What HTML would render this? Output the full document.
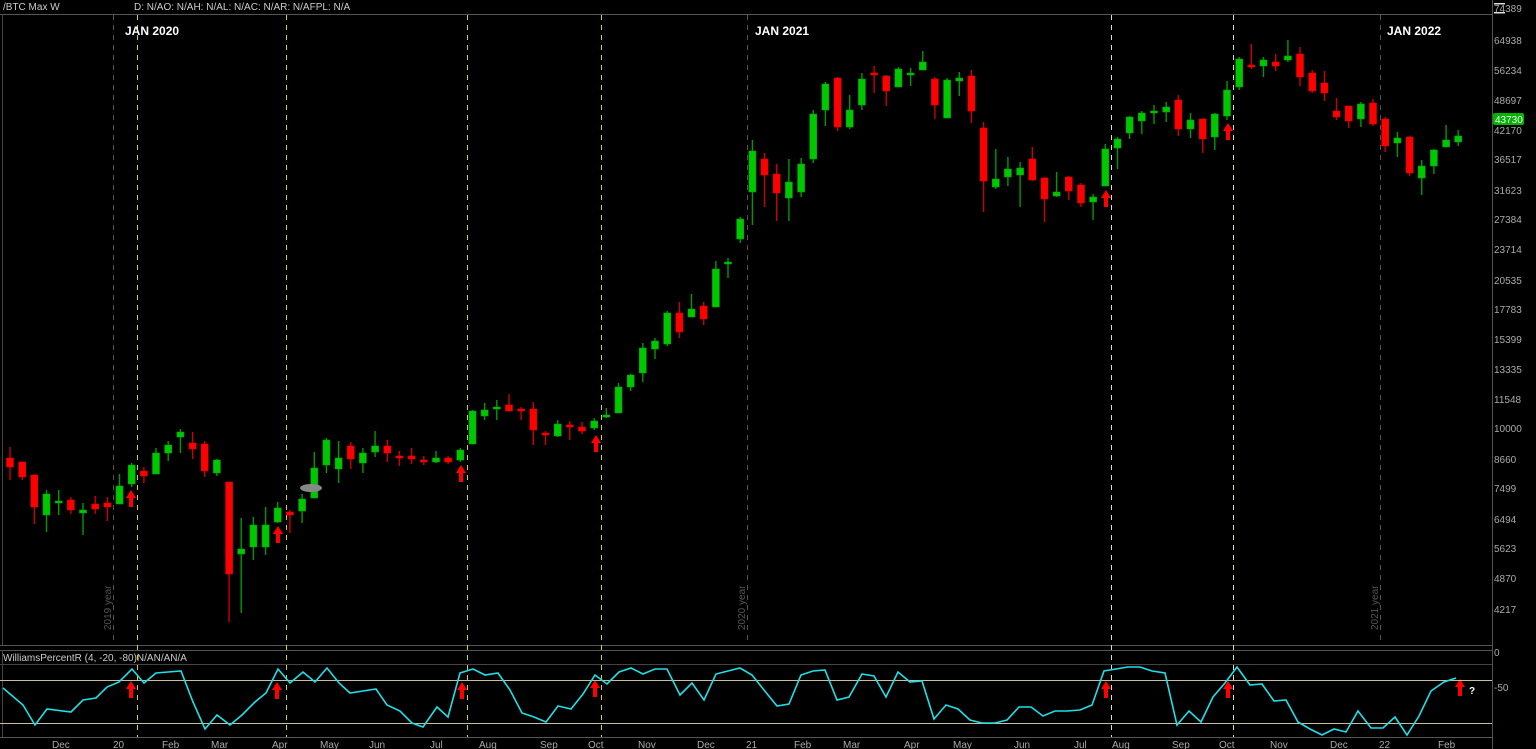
<!DOCTYPE html>
<html><head><meta charset="utf-8"><style>
html,body{margin:0;padding:0;background:#000;width:1536px;height:749px;overflow:hidden}
svg{display:block}
text{font-family:"Liberation Sans",sans-serif}
.g rect{fill:#00c800;stroke:#00a000;stroke-width:.6}
.g path{stroke:#009a00;stroke-width:1.4;fill:none}
.r rect{fill:#f00;stroke:#d00;stroke-width:.6}
.r path{stroke:#c00;stroke-width:1.4;fill:none}
.ax text{fill:#aaa;font-size:10px}
.yl{stroke:#d8d800;stroke-width:1;stroke-dasharray:5,5}
.wl{stroke:#e0e0b8;stroke-width:1;stroke-dasharray:5,5}
.gl{stroke:#555;stroke-width:1;stroke-dasharray:5,5}
</style></head><body>
<svg width="1536" height="749" viewBox="0 0 1536 749">
<rect x="0" y="0" width="1536" height="749" fill="#000"/>
<line x1="0" y1="14.5" x2="1492" y2="14.5" stroke="#555"/>
<line x1="2.5" y1="15" x2="2.5" y2="645" stroke="#444"/>
<line x1="1492.5" y1="0" x2="1492.5" y2="749" stroke="#555"/>
<line x1="0" y1="645.5" x2="1492" y2="645.5" stroke="#555"/>
<line x1="0" y1="650.5" x2="1492" y2="650.5" stroke="#555"/>
<line x1="0" y1="664.5" x2="1492" y2="664.5" stroke="#444"/>
<line x1="2.5" y1="650" x2="2.5" y2="737" stroke="#444"/>
<line x1="0" y1="737.5" x2="1492" y2="737.5" stroke="#555"/>
<text x="3" y="10" fill="#ccc" font-size="10">/BTC Max W</text>
<text x="134" y="10" fill="#ccc" font-size="10">D: N/AO: N/AH: N/AL: N/AC: N/AR: N/AFPL: N/A</text>
<text x="3" y="661" fill="#ccc" font-size="10">WilliamsPercentR (4, -20, -80)N/AN/AN/A</text>

<line class="gl" x1="113.5" y1="15" x2="113.5" y2="645"/>
<line class="gl" x1="747.5" y1="15" x2="747.5" y2="645"/>
<line class="gl" x1="1380.5" y1="15" x2="1380.5" y2="645"/>
<line class="yl" x1="137.5" y1="15" x2="137.5" y2="737"/>
<line class="yl" x1="286.5" y1="15" x2="286.5" y2="737"/>
<line class="yl" x1="467.5" y1="15" x2="467.5" y2="737"/>
<line class="yl" x1="601.5" y1="15" x2="601.5" y2="737"/>
<line class="wl" x1="1111.5" y1="15" x2="1111.5" y2="737"/>
<line class="wl" x1="1233.5" y1="15" x2="1233.5" y2="737"/>
<text x="125" y="35" fill="#fff" font-size="12" font-weight="bold">JAN 2020</text>
<text x="755" y="35" fill="#fff" font-size="12" font-weight="bold">JAN 2021</text>
<text x="1387" y="35" fill="#fff" font-size="12" font-weight="bold">JAN 2022</text>
<g fill="#555" font-size="10">
<text transform="translate(111,630) rotate(-90)">2019 year</text>
<text transform="translate(745,630) rotate(-90)">2020 year</text>
<text transform="translate(1378,630) rotate(-90)">2021 year</text>
</g>

<g>
<g class="r"><path d="M10,447V480"/><rect x="6.5" y="458" width="7" height="9"/></g>
<g class="r"><path d="M22.2,462V480"/><rect x="18.7" y="462" width="7" height="15"/></g>
<g class="r"><path d="M34.3,475V524"/><rect x="30.8" y="475" width="7" height="32"/></g>
<g class="g"><path d="M46.5,490V532"/><rect x="43" y="494" width="7" height="21"/></g>
<g class="g"><path d="M58.7,490V515"/><rect x="55.2" y="501" width="7" height="2"/></g>
<g class="r"><path d="M70.9,497V514"/><rect x="67.4" y="500" width="7" height="10"/></g>
<g class="g"><path d="M83,503V535"/><rect x="79.5" y="510" width="7" height="3"/></g>
<g class="r"><path d="M95.2,496V514"/><rect x="91.7" y="504" width="7" height="5"/></g>
<g class="r"><path d="M107.4,497V521"/><rect x="103.9" y="503" width="7" height="4"/></g>
<g class="g"><path d="M119.5,474V504"/><rect x="116" y="486" width="7" height="18"/></g>
<g class="g"><path d="M131.7,463V487"/><rect x="128.2" y="465" width="7" height="19"/></g>
<g class="r"><path d="M143.9,467V483"/><rect x="140.4" y="471" width="7" height="5"/></g>
<g class="g"><path d="M156,448V474"/><rect x="152.5" y="453" width="7" height="21"/></g>
<g class="g"><path d="M168.2,441V461"/><rect x="164.7" y="445" width="7" height="8"/></g>
<g class="g"><path d="M180.4,429V453"/><rect x="176.9" y="432" width="7" height="5"/></g>
<g class="r"><path d="M192.6,432V459"/><rect x="189.1" y="443" width="7" height="6"/></g>
<g class="r"><path d="M204.7,441V477"/><rect x="201.2" y="444" width="7" height="27"/></g>
<g class="g"><path d="M216.9,459V476"/><rect x="213.4" y="460" width="7" height="13"/></g>
<g class="r"><path d="M229.1,482V622"/><rect x="225.6" y="482" width="7" height="92"/></g>
<g class="g"><path d="M241.2,518V613"/><rect x="237.7" y="549" width="7" height="5"/></g>
<g class="g"><path d="M253.4,517V560"/><rect x="249.9" y="525" width="7" height="22"/></g>
<g class="g"><path d="M265.6,507V555"/><rect x="262.1" y="525" width="7" height="22"/></g>
<g class="g"><path d="M277.7,502V523"/><rect x="274.2" y="508" width="7" height="14"/></g>
<g class="r"><path d="M289.9,510V533"/><rect x="286.4" y="512" width="7" height="3"/></g>
<g class="g"><path d="M302.1,494V523"/><rect x="298.6" y="499" width="7" height="12"/></g>
<g class="g"><path d="M314.3,452V498"/><rect x="310.8" y="468" width="7" height="30"/></g>
<g class="g"><path d="M326.4,438V473"/><rect x="322.9" y="440" width="7" height="25"/></g>
<g class="g"><path d="M338.6,441V483"/><rect x="335.1" y="458" width="7" height="11"/></g>
<g class="r"><path d="M350.8,442V469"/><rect x="347.3" y="446" width="7" height="13"/></g>
<g class="g"><path d="M362.9,448V473"/><rect x="359.4" y="453" width="7" height="10"/></g>
<g class="g"><path d="M375.1,431V457"/><rect x="371.6" y="446" width="7" height="6"/></g>
<g class="r"><path d="M387.3,440V462"/><rect x="383.8" y="446" width="7" height="7"/></g>
<g class="r"><path d="M399.4,451V466"/><rect x="395.9" y="456" width="7" height="2"/></g>
<g class="r"><path d="M411.6,448V464"/><rect x="408.1" y="456" width="7" height="3"/></g>
<g class="r"><path d="M423.8,456V465"/><rect x="420.3" y="460" width="7" height="2"/></g>
<g class="g"><path d="M436,451V463"/><rect x="432.5" y="458" width="7" height="4"/></g>
<g class="r"><path d="M448.1,456V464"/><rect x="444.6" y="458" width="7" height="4"/></g>
<g class="g"><path d="M460.3,448V462"/><rect x="456.8" y="450" width="7" height="10"/></g>
<g class="g"><path d="M472.5,410V444"/><rect x="469" y="411" width="7" height="33"/></g>
<g class="g"><path d="M484.6,403V420"/><rect x="481.1" y="410" width="7" height="6"/></g>
<g class="g"><path d="M496.8,400V420"/><rect x="493.3" y="407" width="7" height="2"/></g>
<g class="r"><path d="M509,394V411"/><rect x="505.5" y="405" width="7" height="6"/></g>
<g class="r"><path d="M521.1,407V420"/><rect x="517.6" y="409" width="7" height="2"/></g>
<g class="r"><path d="M533.3,402V445"/><rect x="529.8" y="409" width="7" height="21"/></g>
<g class="r"><path d="M545.5,431V445"/><rect x="542" y="433" width="7" height="2"/></g>
<g class="g"><path d="M557.7,420V437"/><rect x="554.2" y="424" width="7" height="12"/></g>
<g class="r"><path d="M569.8,421V440"/><rect x="566.3" y="425" width="7" height="2"/></g>
<g class="r"><path d="M582,422V434"/><rect x="578.5" y="427" width="7" height="4"/></g>
<g class="g"><path d="M594.2,418V430"/><rect x="590.7" y="421" width="7" height="7"/></g>
<g class="g"><path d="M606.3,408V418"/><rect x="602.8" y="415" width="7" height="2"/></g>
<g class="g"><path d="M618.5,383V413"/><rect x="615" y="387" width="7" height="26"/></g>
<g class="g"><path d="M630.7,374V391"/><rect x="627.2" y="375" width="7" height="12"/></g>
<g class="g"><path d="M642.8,343V382"/><rect x="639.3" y="348" width="7" height="25"/></g>
<g class="g"><path d="M655,338V359"/><rect x="651.5" y="341" width="7" height="8"/></g>
<g class="g"><path d="M667.2,311V346"/><rect x="663.7" y="313" width="7" height="31"/></g>
<g class="r"><path d="M679.4,302V338"/><rect x="675.9" y="313" width="7" height="19"/></g>
<g class="g"><path d="M691.5,294V317"/><rect x="688" y="309" width="7" height="8"/></g>
<g class="r"><path d="M703.7,302V325"/><rect x="700.2" y="306" width="7" height="13"/></g>
<g class="g"><path d="M715.9,261V307"/><rect x="712.4" y="269" width="7" height="38"/></g>
<g class="g"><path d="M728,258V278"/><rect x="724.5" y="262" width="7" height="2"/></g>
<g class="g"><path d="M740.2,217V243"/><rect x="736.7" y="219" width="7" height="20"/></g>
<g class="g"><path d="M752.4,140V225"/><rect x="748.9" y="151" width="7" height="41"/></g>
<g class="r"><path d="M764.5,153V207"/><rect x="761" y="159" width="7" height="16"/></g>
<g class="r"><path d="M776.7,164V221"/><rect x="773.2" y="174" width="7" height="19"/></g>
<g class="g"><path d="M788.9,159V221"/><rect x="785.4" y="182" width="7" height="16"/></g>
<g class="g"><path d="M801.1,158V197"/><rect x="797.6" y="164" width="7" height="28"/></g>
<g class="g"><path d="M813.2,110V163"/><rect x="809.7" y="114" width="7" height="45"/></g>
<g class="g"><path d="M825.4,82V126"/><rect x="821.9" y="84" width="7" height="26"/></g>
<g class="r"><path d="M837.6,77V131"/><rect x="834.1" y="78" width="7" height="49"/></g>
<g class="g"><path d="M849.7,95V129"/><rect x="846.2" y="110" width="7" height="17"/></g>
<g class="g"><path d="M861.9,73V110"/><rect x="858.4" y="79" width="7" height="26"/></g>
<g class="r"><path d="M874.1,66V93"/><rect x="870.6" y="73" width="7" height="2"/></g>
<g class="r"><path d="M886.2,75V106"/><rect x="882.7" y="76" width="7" height="15"/></g>
<g class="g"><path d="M898.4,67V87"/><rect x="894.9" y="69" width="7" height="18"/></g>
<g class="g"><path d="M910.6,68V86"/><rect x="907.1" y="73" width="7" height="2"/></g>
<g class="g"><path d="M922.8,51V70"/><rect x="919.3" y="62" width="7" height="8"/></g>
<g class="r"><path d="M934.9,77V119"/><rect x="931.4" y="79" width="7" height="26"/></g>
<g class="g"><path d="M947.1,78V118"/><rect x="943.6" y="80" width="7" height="38"/></g>
<g class="g"><path d="M959.3,72V96"/><rect x="955.8" y="78" width="7" height="3"/></g>
<g class="r"><path d="M971.4,70V123"/><rect x="967.9" y="76" width="7" height="35"/></g>
<g class="r"><path d="M983.6,122V212"/><rect x="980.1" y="128" width="7" height="53"/></g>
<g class="g"><path d="M995.8,149V189"/><rect x="992.3" y="179" width="7" height="8"/></g>
<g class="g"><path d="M1007.9,157V186"/><rect x="1004.4" y="169" width="7" height="8"/></g>
<g class="g"><path d="M1020.1,162V207"/><rect x="1016.6" y="168" width="7" height="7"/></g>
<g class="r"><path d="M1032.3,147V181"/><rect x="1028.8" y="159" width="7" height="21"/></g>
<g class="r"><path d="M1044.5,177V222"/><rect x="1041" y="178" width="7" height="21"/></g>
<g class="g"><path d="M1056.6,172V197"/><rect x="1053.1" y="192" width="7" height="4"/></g>
<g class="r"><path d="M1068.8,176V200"/><rect x="1065.3" y="177" width="7" height="14"/></g>
<g class="r"><path d="M1081,183V207"/><rect x="1077.5" y="185" width="7" height="18"/></g>
<g class="g"><path d="M1093.1,194V220"/><rect x="1089.6" y="197" width="7" height="5"/></g>
<g class="g"><path d="M1105.3,144V186"/><rect x="1101.8" y="149" width="7" height="37"/></g>
<g class="g"><path d="M1117.5,137V169"/><rect x="1114" y="139" width="7" height="9"/></g>
<g class="g"><path d="M1129.6,116V139"/><rect x="1126.1" y="117" width="7" height="16"/></g>
<g class="g"><path d="M1141.8,111V134"/><rect x="1138.3" y="113" width="7" height="8"/></g>
<g class="g"><path d="M1154,105V124"/><rect x="1150.5" y="111" width="7" height="2"/></g>
<g class="g"><path d="M1166.2,102V122"/><rect x="1162.7" y="107" width="7" height="5"/></g>
<g class="r"><path d="M1178.3,95V136"/><rect x="1174.8" y="100" width="7" height="29"/></g>
<g class="g"><path d="M1190.5,113V138"/><rect x="1187" y="120" width="7" height="9"/></g>
<g class="r"><path d="M1202.7,118V153"/><rect x="1199.2" y="119" width="7" height="20"/></g>
<g class="g"><path d="M1214.8,113V150"/><rect x="1211.3" y="114" width="7" height="23"/></g>
<g class="g"><path d="M1227,81V120"/><rect x="1223.5" y="90" width="7" height="26"/></g>
<g class="g"><path d="M1239.2,57V90"/><rect x="1235.7" y="59" width="7" height="28"/></g>
<g class="r"><path d="M1251.3,44V69"/><rect x="1247.8" y="65" width="7" height="2"/></g>
<g class="g"><path d="M1263.5,57V77"/><rect x="1260" y="60" width="7" height="6"/></g>
<g class="r"><path d="M1275.7,54V71"/><rect x="1272.2" y="62" width="7" height="4"/></g>
<g class="g"><path d="M1287.9,40V62"/><rect x="1284.4" y="56" width="7" height="4"/></g>
<g class="r"><path d="M1300,47V86"/><rect x="1296.5" y="54" width="7" height="23"/></g>
<g class="r"><path d="M1312.2,70V93"/><rect x="1308.7" y="73" width="7" height="18"/></g>
<g class="r"><path d="M1324.4,71V101"/><rect x="1320.9" y="83" width="7" height="10"/></g>
<g class="r"><path d="M1336.5,98V120"/><rect x="1333" y="111" width="7" height="6"/></g>
<g class="r"><path d="M1348.7,106V128"/><rect x="1345.2" y="106" width="7" height="15"/></g>
<g class="g"><path d="M1360.9,102V127"/><rect x="1357.4" y="104" width="7" height="15"/></g>
<g class="r"><path d="M1373,99V126"/><rect x="1369.5" y="103" width="7" height="21"/></g>
<g class="r"><path d="M1385.2,117V152"/><rect x="1381.7" y="119" width="7" height="27"/></g>
<g class="g"><path d="M1397.4,132V157"/><rect x="1393.9" y="138" width="7" height="5"/></g>
<g class="r"><path d="M1409.6,136V176"/><rect x="1406.1" y="137" width="7" height="36"/></g>
<g class="g"><path d="M1421.7,160V195"/><rect x="1418.2" y="166" width="7" height="12"/></g>
<g class="g"><path d="M1433.9,149V174"/><rect x="1430.4" y="150" width="7" height="16"/></g>
<g class="g"><path d="M1446.1,125V147"/><rect x="1442.6" y="140" width="7" height="7"/></g>
<g class="g"><path d="M1458.2,130V146"/><rect x="1454.7" y="136" width="7" height="6"/></g>
</g>
<ellipse cx="311" cy="488" rx="11" ry="4" fill="#888"/>

<defs><path id="ar" d="M0,0L5,8H2V17H-2V8H-5Z" fill="#f00"/></defs>
<use href="#ar" x="131" y="490"/>
<use href="#ar" x="278" y="526"/>
<use href="#ar" x="461" y="465"/>
<use href="#ar" x="596" y="435"/>
<use href="#ar" x="1106" y="190"/>
<use href="#ar" x="1228" y="123"/>
<use href="#ar" x="131" y="681"/>
<use href="#ar" x="277" y="682"/>
<use href="#ar" x="462" y="682"/>
<use href="#ar" x="595" y="680"/>
<use href="#ar" x="1106" y="681"/>
<use href="#ar" x="1228" y="681"/>
<use href="#ar" x="1460" y="679"/>
<text x="1469" y="694" fill="#fff" font-size="10" font-weight="bold">?</text>

<line x1="0" y1="680.5" x2="1492" y2="680.5" stroke="#c8c09a"/>
<line x1="0" y1="723.5" x2="1492" y2="723.5" stroke="#c8c09a"/>
<polyline fill="none" stroke="#1ee0e8" stroke-width="1.6" points="3,688 23,705 35,725 47,709 71,712 83,700 96,698 107,687 119,682 132,669 144,683 156,673 168,672 181,671 193,702 205,729 217,715 230,725 242,715 255,702 266,693 278,669 290,683 303,672 315,682 327,668 339,683 350,693 363,691 376,689 387,705 400,711 412,723 423,727 437,707 448,717 460,673 473,669 485,675 498,673 510,690 522,713 534,717 546,722 558,706 571,709 583,694 595,675 607,684 619,672 631,668 643,674 655,669 667,669 680,695 692,683 704,700 716,674 728,671 740,668 752,675 764,690 777,706 789,704 801,675 813,671 825,670 837,700 849,697 862,674 874,676 886,697 898,672 910,682 922,681 934,719 946,705 958,709 970,720 982,723 995,723 1007,720 1019,707 1031,707 1043,716 1055,711 1067,711 1080,710 1092,705 1104,671 1116,669 1128,667 1140,667 1152,671 1165,673 1177,725 1189,711 1201,722 1213,697 1225,683 1237,667 1250,685 1262,684 1274,701 1286,700 1298,722 1310,729 1322,735 1334,729 1346,732 1358,711 1371,728 1383,728 1395,717 1407,735 1419,716 1431,691 1444,682 1456,678"/>

<g class="ax">
<text x="1494" y="12">74389</text>
<text x="1494" y="44">64938</text>
<text x="1494" y="74">56234</text>
<text x="1494" y="104">48697</text>
<text x="1494" y="134">42170</text>
<text x="1494" y="163">36517</text>
<text x="1494" y="194">31623</text>
<text x="1494" y="223">27384</text>
<text x="1494" y="253">23714</text>
<text x="1494" y="284">20535</text>
<text x="1494" y="313">17783</text>
<text x="1494" y="343">15399</text>
<text x="1494" y="373">13335</text>
<text x="1494" y="403">11548</text>
<text x="1494" y="432">10000</text>
<text x="1494" y="463">8660</text>
<text x="1494" y="492">7499</text>
<text x="1494" y="523">6494</text>
<text x="1494" y="552">5623</text>
<text x="1494" y="582">4870</text>
<text x="1494" y="613">4217</text>
<text x="1494" y="656">0</text>
<text x="1494" y="691">-50</text>
</g>
<rect x="1494" y="3" width="11" height="1.5" fill="#ddd"/>
<rect x="1494" y="12" width="11" height="1.5" fill="#ddd"/>
<rect x="1493" y="113" width="31" height="12" rx="2" fill="#00b400"/>
<text x="1495" y="123" fill="#fff" font-size="10">43730</text>

<g class="ax">
<text x="52" y="748">Dec</text><text x="113" y="748">20</text><text x="162" y="748">Feb</text>
<text x="211" y="748">Mar</text><text x="272" y="748">Apr</text><text x="320" y="748">May</text>
<text x="369" y="748">Jun</text><text x="430" y="748">Jul</text><text x="479" y="748">Aug</text>
<text x="540" y="748">Sep</text><text x="588" y="748">Oct</text><text x="638" y="748">Nov</text>
<text x="697" y="748">Dec</text><text x="746" y="748">21</text><text x="794" y="748">Feb</text>
<text x="843" y="748">Mar</text><text x="904" y="748">Apr</text><text x="953" y="748">May</text>
<text x="1014" y="748">Jun</text><text x="1074" y="748">Jul</text><text x="1112" y="748">Aug</text>
<text x="1172" y="748">Sep</text><text x="1219" y="748">Oct</text><text x="1270" y="748">Nov</text>
<text x="1330" y="748">Dec</text><text x="1379" y="748">22</text><text x="1438" y="748">Feb</text>
</g>
</svg>
</body></html>
